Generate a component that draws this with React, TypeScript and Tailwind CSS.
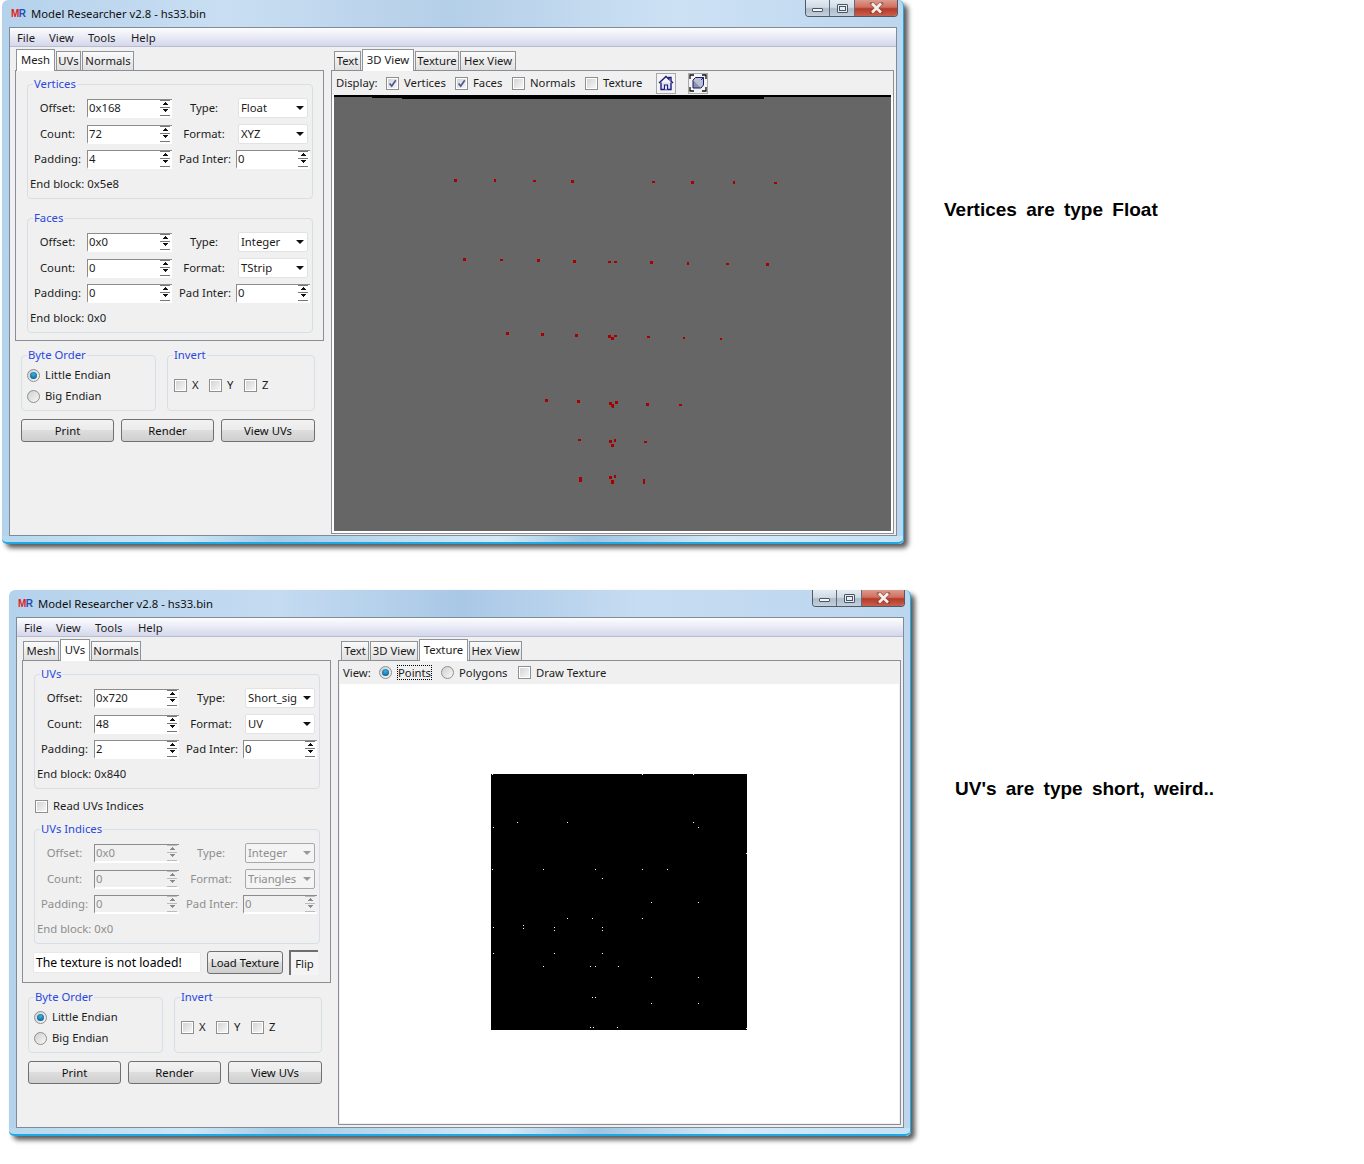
import React from "react";

const F = 'font-["Noto_Sans",sans-serif] text-[11.3px] leading-[16px] text-[#1c1c1c]';

function SpinArrows({ dim }: { dim?: boolean }) {
  const c = dim ? "#8a8a8a" : "#111";
  return (
    <svg width="12" height="18" viewBox="0 0 12 18" shapeRendering="crispEdges" className="shrink-0">
      <path d="M1 1h10M1 8h10M1 16h10" stroke={dim ? "#bbb" : "#777"} fill="none" />
      <path d="M6 3l3 3H3z M6 13l-3-3h6z" fill={c} />
    </svg>
  );
}

function Spin({ value, w, dim }: { value: string; w: number; dim?: boolean }) {
  return (
    <div
      style={{ width: w }}
      className={
        "h-[19px] flex items-center justify-between border-l border-t border-[#8c8c8c] pl-[1px] pr-[1px] border-b-2 border-b-[#ffffff] " +
        (dim ? "bg-[#f0f0f0] text-[#8e8e8e]" : "bg-white text-[#1c1c1c]")
      }
    >
      <span>{value}</span>
      <SpinArrows dim={dim} />
    </div>
  );
}

function Combo({ value, dim }: { value: string; dim?: boolean }) {
  return (
    <div
      className={
        "w-[70px] h-[20px] -mt-[1px] ml-[9px] flex items-center justify-between pl-[2px] pr-[3px] rounded-[2px] border " +
        (dim ? "border-[#a8a8a8] bg-[#f4f4f4] text-[#8e8e8e]" : "border-[#e2e2e2] bg-white text-[#1c1c1c]")
      }
    >
      <span>{value}</span>
      <svg width="8" height="4" viewBox="0 0 8 4" className="shrink-0">
        <path d="M0 0h8L4 4z" fill={dim ? "#999" : "#111"} />
      </svg>
    </div>
  );
}

function Row({ label, value, rightLabel, right, dim }: { label: string; value: string; rightLabel: string; right: string; dim?: boolean }) {
  const spinRight = rightLabel === "Pad Inter:";
  return (
    <div className={"flex h-[19px] items-center " + (dim ? "text-[#8e8e8e]" : "")}>
      <span className="w-[47px] -mt-[2px] text-center whitespace-nowrap">{label}</span>
      <div className="ml-[6px]">
        <Spin value={value} w={85} dim={dim} />
      </div>
      <span className="ml-[7px] -mt-[2px] w-[50px] text-center whitespace-nowrap">{rightLabel}</span>
      {spinRight ? (
        <div className="ml-[7px]">
          <Spin value={right} w={74} dim={dim} />
        </div>
      ) : (
        <Combo value={right} dim={dim} />
      )}
    </div>
  );
}

function Group({ title, className, children }: { title: string; className: string; children: React.ReactNode }) {
  return (
    <div className={"relative border border-[#d6dfe6] rounded-[4px] " + className}>
      <span className="absolute left-[5px] -top-[9px] px-[1px] bg-[#f0f0f0] text-[#2a48e0] whitespace-nowrap">{title}</span>
      {children}
    </div>
  );
}

function FieldGroup({ title, rows, end, dim }: { title: string; rows: [string, string, string, string][]; end: string; dim?: boolean }) {
  return (
    <Group title={title} className="w-[286px] h-[115px] pl-[6px] pt-[14px]">
      <div className="flex flex-col">
        <Row label={rows[0][0]} value={rows[0][1]} rightLabel={rows[0][2]} right={rows[0][3]} dim={dim} />
        <div className="h-[7px]" />
        <Row label={rows[1][0]} value={rows[1][1]} rightLabel={rows[1][2]} right={rows[1][3]} dim={dim} />
        <div className="h-[6px]" />
        <Row label={rows[2][0]} value={rows[2][1]} rightLabel={rows[2][2]} right={rows[2][3]} dim={dim} />
      </div>
      <div className={"mt-[7px] -ml-[4px] " + (dim ? "text-[#8e8e8e]" : "")}>End block: {end}</div>
    </Group>
  );
}

function Check({ checked }: { checked?: boolean }) {
  return (
    <span className="w-[13px] h-[13px] shrink-0 border border-[#8e8f8f] p-[1px] bg-white flex">
      <span className="flex-1 bg-[linear-gradient(135deg,#d4d4d4,#f6f6f6)] flex items-center justify-center">
        {checked && (
          <svg width="9" height="9" viewBox="0 0 9 9">
            <path d="M1.5 4.5l2.2 2.6L7.8 1.2" stroke="#4a5c96" strokeWidth="1.7" fill="none" />
          </svg>
        )}
      </span>
    </span>
  );
}

function Radio({ on }: { on?: boolean }) {
  return (
    <span className="w-[13px] h-[13px] shrink-0 rounded-full border border-[#8e8f8f] bg-[linear-gradient(135deg,#cfcfcf,#f8f8f8)] flex items-center justify-center">
      {on && <span className="w-[7px] h-[7px] rounded-full bg-[radial-gradient(circle_at_50%_35%,#33b5e8,#0b4a78)]" />}
    </span>
  );
}

function Btn({ label, w }: { label: string; w: number }) {
  return (
    <div
      style={{ width: w }}
      className="h-[23px] flex items-center justify-center rounded-[3px] border border-[#707070] bg-[linear-gradient(#f2f2f2_0%,#ebebeb_48%,#dddddd_50%,#cfcfcf_100%)] text-[#111]"
    >
      {label}
    </div>
  );
}

function BottomControls() {
  return (
    <div className="pl-[6px]">
      <div className="flex gap-[11px] mt-[14px]">
        <Group title="Byte Order" className="w-[135px] h-[56px] pl-[5px] pt-[10px]">
          <div className="flex items-center gap-[5px] h-[18px]">
            <Radio on />
            <span>Little Endian</span>
          </div>
          <div className="flex items-center gap-[5px] h-[18px] mt-[3px]">
            <Radio />
            <span>Big Endian</span>
          </div>
        </Group>
        <Group title="Invert" className="w-[148px] h-[56px] pl-[6px] pt-[20px]">
          <div className="flex items-center h-[18px]">
            <Check />
            <span className="ml-[5px] w-[17px]">X</span>
            <Check />
            <span className="ml-[5px] w-[17px]">Y</span>
            <Check />
            <span className="ml-[5px]">Z</span>
          </div>
        </Group>
      </div>
      <div className="flex gap-[7px] mt-[8px]">
        <Btn label="Print" w={93} />
        <Btn label="Render" w={93} />
        <Btn label="View UVs" w={94} />
      </div>
    </div>
  );
}

function Tab({ label, w, active }: { label: string; w: number; active?: boolean }) {
  return (
    <div
      style={{ width: w }}
      className={
        "flex items-center justify-center whitespace-nowrap border border-[#8f939a] " +
        (active
          ? "h-[22px] -mb-[1px] border-b-0 bg-white relative pb-[2px]"
          : "h-[19px] border-b-0 bg-[linear-gradient(#fafafa,#e0e0e0)]")
      }
    >
      {label}
    </div>
  );
}

function Logo() {
  return (
    <span className='font-["Liberation_Sans",sans-serif] font-bold text-[10px] leading-[9px] tracking-[-0.5px] w-[21px] pl-[1px]'>
      <span className="text-[#e02020]">M</span>
      <span className="text-[#2850b0]">R</span>
    </span>
  );
}

function Controls() {
  const glass = "bg-[linear-gradient(#e4ebf2_0%,#d2dce6_45%,#aebccb_55%,#c3d0dc_100%)]";
  return (
    <div className="mr-[5px] h-[17px] w-[93px] flex rounded-b-[4px] border border-t-0 border-[#4f5a66] overflow-hidden">
      <div className={"w-[24px] border-r border-[#5f6b78] flex items-center justify-center pt-[3px] " + glass}>
        <span className="w-[11px] h-[4px] border border-[#4a5563] bg-[#f4f6f8] rounded-[1px]" />
      </div>
      <div className={"w-[25px] border-r border-[#5f6b78] flex items-center justify-center " + glass}>
        <span className="w-[11px] h-[9px] border border-[#4a5563] bg-[#e8edf2] p-[1px] flex rounded-[1px]">
          <span className="flex-1 border border-[#4a5563]" />
        </span>
      </div>
      <div className="flex-1 bg-[linear-gradient(#dc9c90_0%,#cf6f5f_45%,#b53a28_55%,#c9604f_100%)] flex items-center justify-center">
        <svg width="15" height="12" viewBox="0 0 15 12">
          <path d="M3 1.5l9 9M12 1.5l-9 9" stroke="#6e3a32" strokeWidth="4" strokeLinecap="square" opacity="0.5" />
          <path d="M3 1.5l9 9M12 1.5l-9 9" stroke="#f4f0ee" strokeWidth="2.6" />
        </svg>
      </div>
    </div>
  );
}

function Window({
  height,
  tintClass,
  left,
  right,
  leftTabs,
  rightTabs,
  leftPanelH,
  rightPanelH,
}: {
  height: number;
  tintClass: string;
  left: React.ReactNode;
  right: React.ReactNode;
  leftTabs: [string, number, boolean][];
  rightTabs: [string, number, boolean][];
  leftPanelH: number;
  rightPanelH: number;
}) {
  return (
    <div
      style={{ height }}
      className={
        "w-[902px] shrink-0 flex flex-col rounded-t-[6px] rounded-b-[5px] border-r border-[#1fa8e4] shadow-[4px_4px_5px_rgba(0,0,0,0.65)] " + tintClass
      }
    >
      <div className="h-[27px] shrink-0 flex items-start justify-between pl-[8px]">
        <div className="flex items-center h-[27px]">
          <Logo />
          <span className="text-[#111]">Model Researcher v2.8 - hs33.bin</span>
        </div>
        <Controls />
      </div>
      <div className="flex-1 ml-[7px] mr-[6px] flex flex-col border border-[#7f8b98] bg-[#f0f0f0]">
        <div className="h-[19px] shrink-0 flex items-center bg-[linear-gradient(#fdfdfe,#d4d7ec)] border-b border-[#b8bccb] pl-[7px] pt-[1px]">
          <span className="w-[32px]">File</span>
          <span className="w-[39px]">View</span>
          <span className="w-[43px]">Tools</span>
          <span>Help</span>
        </div>
        <div className="flex pt-[2px]">
          <div className="w-[321px] pl-[5px] shrink-0">
            <div className="flex items-end h-[21px] pl-[1px] gap-[1px]">
              {leftTabs.map(([l, w, a]) => (
                <Tab key={l} label={l} w={w} active={a} />
              ))}
            </div>
            <div style={{ height: leftPanelH }} className="w-[309px] border border-[#8a8e96] pl-[11px] pt-[13px]">
              {left}
            </div>
            <BottomControls />
          </div>
          <div className="flex-1">
            <div className="flex items-end h-[21px] pl-[3px] gap-[1px]">
              {rightTabs.map(([l, w, a]) => (
                <Tab key={l} label={l} w={w} active={a} />
              ))}
            </div>
            <div style={{ height: rightPanelH }} className="w-[563px] border border-[#8a8e96] flex flex-col">
              {right}
            </div>
          </div>
        </div>
      </div>
      <div className="h-[8px] shrink-0 rounded-b-[5px] border-b-2 border-[#1fa8e4] bg-[linear-gradient(90deg,#b6d8ee,#cfe6f5_20%,#a6cbe6_30%,#d5eaf7_55%,#9fc4e0_65%,#d5eaf7_80%,#c6e2f6)]" />
    </div>
  );
}

const D: [number, number, number?, number?][] = [
  [455, 180], [495, 180, 2, 3], [534, 181, 3, 2], [572, 181], [653, 182, 3, 2], [692, 182], [734, 182, 2, 3], [775, 183, 3, 2],
  [464, 259], [501, 260, 3, 2], [538, 260], [574, 261], [609, 262, 3, 2], [615, 262, 3, 2], [651, 262], [688, 263, 2, 3], [727, 264, 3, 2], [767, 264],
  [507, 333], [542, 334], [576, 335], [609, 336], [615, 336, 3, 2], [612, 338], [648, 337, 3, 2], [684, 338, 2, 2], [721, 339, 2, 2],
  [546, 400], [578, 401], [610, 403], [616, 402], [612, 405], [613, 407, 2, 2], [647, 404], [680, 405, 3, 2],
  [579, 440, 3, 2], [610, 441], [615, 440, 2, 3], [612, 445], [645, 442, 3, 2],
  [580, 478, 3, 5], [610, 477], [615, 476, 2, 3], [612, 481, 3, 4], [644, 480, 2, 5],
];

function Viewport() {
  return (
    <div className="flex-1 bg-white px-[2px] pb-[2px]">
      <svg width="557" height="436" viewBox="0 0 557 436" shapeRendering="crispEdges" className="block bg-[#666666]">
        <rect x="0" y="0" width="557" height="2" fill="#000" />
        <rect x="38" y="0" width="392" height="3" fill="#000" />
        <rect x="68" y="0" width="362" height="4" fill="#000" />
        {D.map(([x, y, w, h], i) => (
          <rect key={i} x={x - 335} y={y - 96} width={w ?? 3} height={h ?? 3} fill="#a80000" />
        ))}
      </svg>
    </div>
  );
}

const P = [
  [36, 27], [487, 27], [640, 27], [112, 172], [262, 172], [640, 172], [40, 187], [655, 187], [800, 265], [37, 313], [190, 313], [346, 313],
  [487, 313], [562, 313], [367, 340], [514, 412], [655, 412], [262, 460], [337, 460], [487, 460], [40, 487], [130, 481], [130, 490],
  [223, 487], [223, 496], [367, 487], [367, 496], [40, 565], [223, 565], [367, 565], [190, 604], [331, 604], [346, 604], [415, 604],
  [514, 637], [655, 637], [337, 697], [346, 697], [514, 715], [655, 715], [331, 787], [340, 787], [412, 787], [800, 790],
];

function TextureMap() {
  return (
    <svg width="256" height="256" viewBox="0 0 256 256" shapeRendering="crispEdges" className="block bg-black">
      {P.map(([x, y], i) => (
        <rect key={i} x={Math.floor(x / 3 - 11)} y={Math.floor(y / 3 - 9)} width="1" height="1" fill="#fff" />
      ))}
    </svg>
  );
}

function IconBtn({ children }: { children: React.ReactNode }) {
  return <div className="w-[20px] h-[21px] border border-[#a9a9a9] bg-[#f4f4f4] flex items-center justify-center">{children}</div>;
}

function Toolbar1() {
  return (
    <div className="h-[24px] shrink-0 flex items-center pl-[4px]">
      <span className="w-[50px]">Display:</span>
      <Check checked />
      <span className="ml-[5px] w-[51px]">Vertices</span>
      <Check checked />
      <span className="ml-[5px] w-[39px]">Faces</span>
      <Check />
      <span className="ml-[5px] w-[55px]">Normals</span>
      <Check />
      <span className="ml-[5px] w-[53px]">Texture</span>
      <IconBtn>
        <svg width="16" height="16" viewBox="0 0 16 16">
          <path d="M1 8L8 1.5l3 2.8V2.5h2v3.6L15 8" stroke="#1a1a80" strokeWidth="1.4" fill="none" />
          <path d="M3 7.5V14.5H13V7.5" stroke="#1a1a80" strokeWidth="1.4" fill="#dfe4f5" />
          <path d="M6.5 14.5V10h3v4.5" stroke="#1a1a80" strokeWidth="1.2" fill="#fff" />
        </svg>
      </IconBtn>
      <div className="w-[12px]" />
      <IconBtn>
        <svg width="18" height="18" viewBox="0 0 18 18">
          <path d="M1 5V1h4M13 1h4v4M1 13v4h4M17 13v4h-4" stroke="#111" strokeWidth="1.3" fill="none" />
          <path d="M4 6h8v8H4z" fill="#8a90a8" stroke="#1a1a70" />
          <path d="M4 6l2.5-2.5h8V11L12 14M12 6l2.5-2.5" fill="#b9bfd2" stroke="#1a1a70" />
        </svg>
      </IconBtn>
    </div>
  );
}

function Toolbar2() {
  return (
    <div className="h-[23px] shrink-0 flex items-center pl-[4px]">
      <span className="w-[36px]">View:</span>
      <Radio on />
      <span className="ml-[5px] w-[35px] h-[15px] flex items-center justify-center border border-dotted border-black">Points</span>
      <span className="w-[9px]" />
      <Radio />
      <span className="ml-[5px] w-[59px]">Polygons</span>
      <Check />
      <span className="ml-[5px]">Draw Texture</span>
    </div>
  );
}

const vRows: [string, string, string, string][] = [
  ["Offset:", "0x168", "Type:", "Float"],
  ["Count:", "72", "Format:", "XYZ"],
  ["Padding:", "4", "Pad Inter:", "0"],
];
const fRows: [string, string, string, string][] = [
  ["Offset:", "0x0", "Type:", "Integer"],
  ["Count:", "0", "Format:", "TStrip"],
  ["Padding:", "0", "Pad Inter:", "0"],
];
const uRows: [string, string, string, string][] = [
  ["Offset:", "0x720", "Type:", "Short_sig"],
  ["Count:", "48", "Format:", "UV"],
  ["Padding:", "2", "Pad Inter:", "0"],
];
const iRows: [string, string, string, string][] = [
  ["Offset:", "0x0", "Type:", "Integer"],
  ["Count:", "0", "Format:", "Triangles"],
  ["Padding:", "0", "Pad Inter:", "0"],
];

export default function App() {
  return (
    <div className={"w-[1364px] h-[1164px] bg-white overflow-hidden " + F}>
      <div className="flex items-start pl-[2px]">
        <Window
          height={544}
          tintClass="bg-[linear-gradient(90deg,#b5d2ec,#c9def2_25%,#b4cfe8_50%,#cde1f4_75%,#bcd6ee)]"
          leftTabs={[["Mesh", 39, true], ["UVs", 25, false], ["Normals", 52, false]]}
          rightTabs={[["Text", 27, false], ["3D View", 52, true], ["Texture", 44, false], ["Hex View", 56, false]]}
          leftPanelH={271}
          rightPanelH={464}
          left={
            <>
              <FieldGroup title="Vertices" rows={vRows} end="0x5e8" />
              <div className="h-[19px]" />
              <FieldGroup title="Faces" rows={fRows} end="0x0" />
            </>
          }
          right={
            <>
              <Toolbar1 />
              <Viewport />
            </>
          }
        />
        <div className='ml-[40px] mt-[198px] font-["Liberation_Sans",sans-serif] font-bold text-[19px] leading-[24px] text-black [word-spacing:4px] whitespace-nowrap'>
          Vertices are type Float
        </div>
      </div>
      <div className="flex items-start pl-[9px] mt-[46px]">
        <Window
          height={546}
          tintClass="bg-[linear-gradient(90deg,#b5d2ec,#c4dbf1_30%,#a9c8e6_50%,#c6dcf2_70%,#bcd6ee)]"
          leftTabs={[["Mesh", 36, false], ["UVs", 30, true], ["Normals", 50, false]]}
          rightTabs={[["Text", 28, false], ["3D View", 48, false], ["Texture", 49, true], ["Hex View", 53, false]]}
          leftPanelH={323}
          rightPanelH={465}
          left={
            <>
              <FieldGroup title="UVs" rows={uRows} end="0x840" />
              <div className="flex items-center h-[16px] mt-[9px] ml-[1px] gap-[5px]">
                <Check />
                <span>Read UVs Indices</span>
              </div>
              <div className="h-[15px]" />
              <FieldGroup title="UVs Indices" rows={iRows} end="0x0" dim />
              <div className="flex items-center mt-[6px] -ml-[1px]">
                <div className="w-[168px] h-[21px] bg-white border border-[#e8e8e8] rounded-[2px] flex items-center pl-[2px] text-[12.2px] text-[#000]">
                  The texture is not loaded!
                </div>
                <div className="ml-[6px]">
                  <Btn label="Load Texture" w={76} />
                </div>
                <div className="ml-[6px] w-[29px] h-[25px] flex items-center justify-center border-l-2 border-t-2 border-[#6f6f6f] bg-[#f4f4f4]">
                  Flip
                </div>
              </div>
            </>
          }
          right={
            <>
              <Toolbar2 />
              <div className="flex-1 mx-[1px] mb-[1px] bg-white pl-[151px] pt-[90px]">
                <TextureMap />
              </div>
            </>
          }
        />
        <div className='ml-[44px] mt-[187px] font-["Liberation_Sans",sans-serif] font-bold text-[19px] leading-[24px] text-black [word-spacing:4px] whitespace-nowrap'>
          UV's are type short, weird..
        </div>
      </div>
    </div>
  );
}
